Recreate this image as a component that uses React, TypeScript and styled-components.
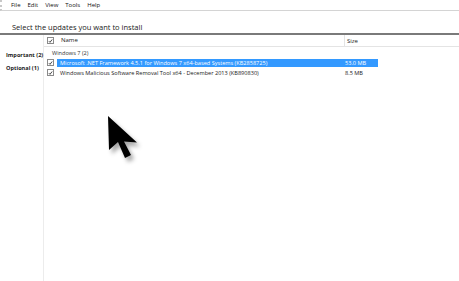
import React from 'react';
import styled, { createGlobalStyle } from 'styled-components';

const GlobalStyle = createGlobalStyle`
  html, body {
    margin: 0;
    padding: 0;
    background: #ffffff;
  }
  body {
    font-family: 'Open Sans', 'Noto Sans', 'Liberation Sans', sans-serif;
    color: #1a1a1a;
    width: 459px;
    height: 281px;
    overflow: hidden;
  }
`;

interface UpdateItem {
  id: string;
  name: string;
  size: string;
  selected?: boolean;
}

const updates: UpdateItem[] = [
  {
    id: 'KB2858725',
    name: 'Microsoft .NET Framework 4.5.1 for Windows 7 x64-based Systems (KB2858725)',
    size: '53.0 MB',
    selected: true,
  },
  {
    id: 'KB890830',
    name: 'Windows Malicious Software Removal Tool x64 - December 2013 (KB890830)',
    size: '8.5 MB',
  },
];

const menuItems = ['File', 'Edit', 'View', 'Tools', 'Help'];

const CheckMark: React.FC = () => (
  <svg width="6" height="6" viewBox="0 0 6 6">
    <path d="M1 3.2 L2.4 4.6 L5 1.2" fill="none" stroke="#222" strokeWidth="1" />
  </svg>
);

// mouse pointer drawn over the list
const Cursor: React.FC = () => (
  <svg width="40" height="50" viewBox="0 0 40 50">
    <polygon points="0,0 1,34 10,26 17,42 23,39 16,25.5 29,26.5" fill="#000" />
  </svg>
);

export default function App() {
  return (
    <Page>
      <GlobalStyle />
      <MenuBar>
        {menuItems.map((item) => (
          <MenuItem key={item}>{item}</MenuItem>
        ))}
      </MenuBar>
      <Title>Select the updates you want to install</Title>
      <Body>
        <Sidebar>
          <CategoryLabel>Important (2)</CategoryLabel>
          <CategoryLabel>Optional (1)</CategoryLabel>
        </Sidebar>
        <ListArea>
          <HeaderRow>
            <Checkbox>
              <CheckMark />
            </Checkbox>
            <NameHeader>Name</NameHeader>
            <SizeHeader>Size</SizeHeader>
          </HeaderRow>
          <GroupLabel>Windows 7 (2)</GroupLabel>
          {updates.map((u) => (
            <UpdateRow key={u.id}>
              <Checkbox>
                <CheckMark />
              </Checkbox>
              <RowBody $selected={!!u.selected}>
                <RowName>{u.name}</RowName>
                <RowSize>{u.size}</RowSize>
              </RowBody>
            </UpdateRow>
          ))}
          <CursorHolder>
            <Cursor />
          </CursorHolder>
        </ListArea>
      </Body>
    </Page>
  );
}

const Page = styled.div`
  width: 459px;
  height: 281px;
  display: flex;
  flex-direction: column;
  background: #fff;
`;

const MenuBar = styled.div`
  display: flex;
  align-items: center;
  padding-left: 9px;
  border-bottom: 1px solid #d4d4d4;
  border-left: 2px dotted #c8c8c8;
  box-sizing: border-box;
  height: 11px;
`;

const MenuItem = styled.span`
  font-size: 6px;
  line-height: 10px;
  margin-right: 7px;
  color: #111;
`;

const Title = styled.div`
  font-size: 7.5px;
  line-height: 10px;
  padding: 11px 0 0 12px;
  height: 24px;
  box-sizing: border-box;
  border-bottom: 2px solid #7a7a7a;
`;

const Body = styled.div`
  flex: 1;
  display: flex;
`;

const Sidebar = styled.div`
  width: 44px;
  border-right: 1px solid #ececec;
  padding: 17px 0 0 6px;
  box-sizing: border-box;
  display: flex;
  flex-direction: column;
  gap: 6px;
`;

const CategoryLabel = styled.div`
  font-size: 5.6px;
  font-weight: 700;
  line-height: 7px;
  white-space: nowrap;
`;

const ListArea = styled.div`
  flex: 1;
  position: relative;
  padding-left: 3px;
`;

const HeaderRow = styled.div`
  display: flex;
  align-items: center;
  height: 11px;
  border-bottom: 1px solid #e4e4e4;
  margin-left: -3px;
  padding-left: 3px;
`;

const Checkbox = styled.div`
  width: 5px;
  height: 5px;
  border: 1px solid #8a8a8a;
  background: #fff;
  display: flex;
  align-items: center;
  justify-content: center;
  flex-shrink: 0;
  svg {
    display: block;
  }
`;

const NameHeader = styled.span`
  font-size: 6px;
  margin-left: 7px;
  width: 283px;
  border-right: 1px solid #e4e4e4;
  line-height: 11px;
`;

const SizeHeader = styled.span`
  font-size: 6px;
  margin-left: 2px;
`;

const GroupLabel = styled.div`
  font-size: 5.6px;
  line-height: 8px;
  padding: 2px 0 0 5px;
  color: #333;
`;

const UpdateRow = styled.div`
  display: flex;
  align-items: center;
  height: 9px;
  margin-top: 1px;
`;

const RowBody = styled.div<{ $selected: boolean }>`
  display: flex;
  align-items: center;
  width: 321px;
  height: 8px;
  margin-left: 3px;
  background: ${(p) => (p.$selected ? '#3399ff' : 'transparent')};
  color: ${(p) => (p.$selected ? '#fff' : '#1a1a1a')};
`;

const RowName = styled.span`
  font-size: 5.6px;
  line-height: 8px;
  width: 285px;
  padding-left: 3px;
  white-space: nowrap;
`;

const RowSize = styled.span`
  font-size: 5.6px;
  line-height: 8px;
`;

const CursorHolder = styled.div`
  position: absolute;
  left: 64px;
  top: 81px;
  filter: drop-shadow(3px 4px 2px rgba(0, 0, 0, 0.35));
`;
